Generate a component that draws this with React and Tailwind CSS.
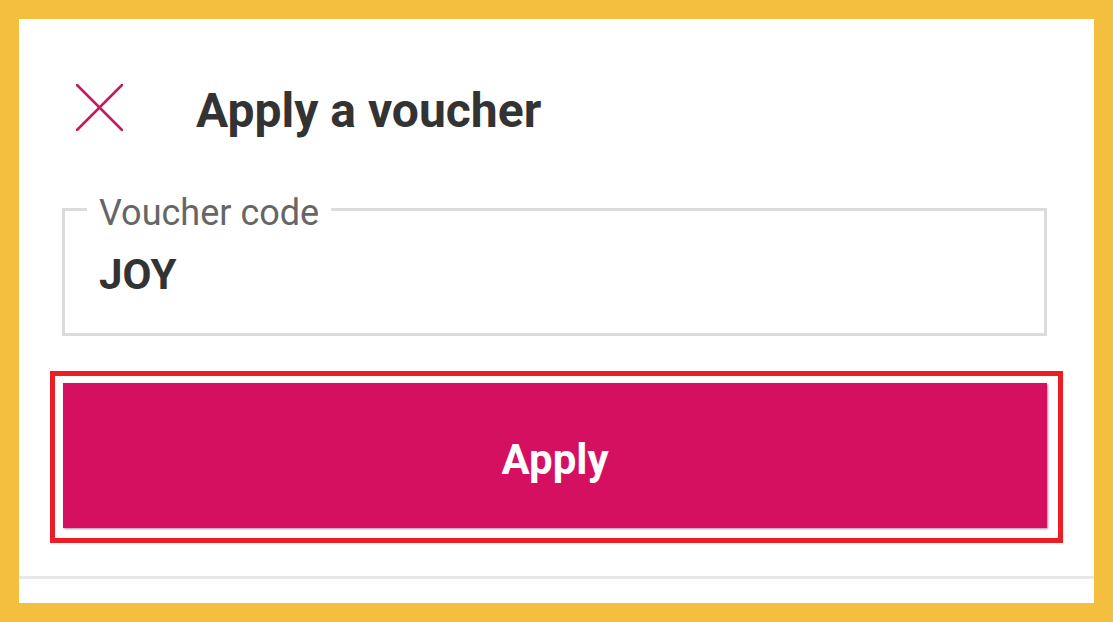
export default function App() {
  const font = { fontFamily: "Roboto, 'Noto Sans', sans-serif" };
  return (
    <div className="w-[1113px] h-[622px] bg-[#F4BE3F] p-[19px]" style={font}>
      <div className="relative bg-white w-full h-full flex flex-col">
        {/* Header */}
        <div className="h-[189px] flex items-start">
          <svg
            className="ml-[57px] mt-[65px] shrink-0"
            width="47"
            height="47"
            viewBox="0 0 47 47"
          >
            <line x1="1" y1="1" x2="46" y2="46" stroke="#C7195E" strokeWidth="2.5" strokeLinecap="round" />
            <line x1="46" y1="1" x2="1" y2="46" stroke="#C7195E" strokeWidth="2.5" strokeLinecap="round" />
          </svg>
          <h1 className="ml-[73px] mt-[68px] text-[48px] leading-none font-bold text-[#333333]">
            Apply a voucher
          </h1>
        </div>

        {/* Input */}
        <div className="relative ml-[43px] mr-[47px] h-[128px] border-[3px] border-[#dcdcdc]">
          <span className="absolute left-[22px] top-[-16px] bg-white px-[12px] text-[36px] leading-none text-[#666666]">
            Voucher code
          </span>
          <div className="pl-[34px] pt-[43px] text-[42px] leading-none font-bold text-[#333333]">
            JOY
          </div>
        </div>

        {/* Button */}
        <button className="mt-[47px] ml-[44px] mr-[47px] h-[145px] bg-[#D51060] shadow-[1px_1px_2px_rgba(80,0,60,0.45)] flex items-center justify-center pt-[8px] text-white text-[42px] leading-none font-bold">
          Apply
        </button>

        {/* Separator */}
        <div className="mt-[48px] h-[3px] bg-[#e8e8e8]" />

        {/* Annotation outline */}
        <div className="absolute left-[31px] top-[352px] w-[1013px] h-[172px] border-[5px] border-[#EE1C25] pointer-events-none" />
      </div>
    </div>
  );
}
